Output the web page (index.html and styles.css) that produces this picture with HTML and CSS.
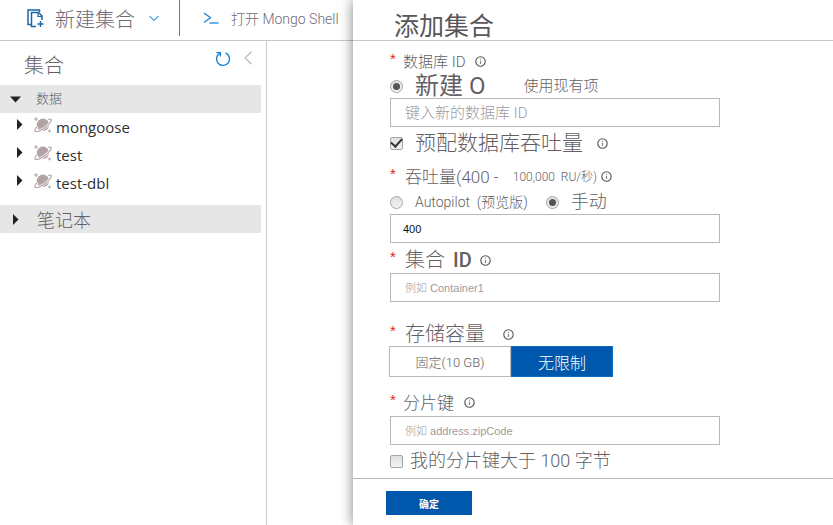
FILE: index.html
```html
<!DOCTYPE html>
<html lang="zh-CN">
<head>
<meta charset="utf-8">
<meta name="viewport" content="width=device-width, initial-scale=1">
<title>添加集合</title>
<link rel="stylesheet" href="styles.css">
</head>
<body>
<svg class="defs" aria-hidden="true">
  <symbol id="info" viewBox="0 0 11 11"><circle cx="5.5" cy="5.5" r="4.7" fill="#fff" stroke="#555" stroke-width="1.1"/><path d="M5.5 4.7V8M5.5 2.8v1" stroke="#888" stroke-width="1.2"/></symbol>
  <symbol id="planet" viewBox="0 0 18 17"><circle cx="9" cy="7.8" r="6.2" fill="#b3a3a5"/><path d="M3.5 9.2C1.5 11.4.4 13.4 1.2 14.2c1.2 1.3 6-.6 10.3-3.9 4.3-3.3 6.5-6.8 5.5-7.9-.5-.6-1.5-.4-2.8.1" fill="none" stroke="#fff" stroke-width="2.4"/><path d="M3.5 9.2C1.5 11.4.4 13.4 1.2 14.2c1.2 1.3 6-.6 10.3-3.9 4.3-3.3 6.5-6.8 5.5-7.9-.5-.6-1.5-.4-2.8.1" fill="none" stroke="#b3a3a5" stroke-width="1.2"/><path d="M2 0v4M0 2h4M15.5 12.5v3M14 14h3" stroke="#b3a3a5" stroke-width="1"/></symbol>
</svg>
<div class="app">
  <main class="explorer">
    <header class="toolbar">
      <button class="command new" type="button">
        <svg class="copy" viewBox="0 0 17 19" fill="none" stroke="#1767a8" stroke-width="1.5"><path d="M4 15.5H1V1h11.5v2"/><path d="M9 17.5H4.5V3.5h7l3.5 3.5v4"/><path d="M11 3.5V7.5h4" stroke-width="1.2"/><path d="M13.5 12v6M10.5 15h6" stroke-width="1.4"/></svg>
        <span>新建集合</span>
        <svg class="down" viewBox="0 0 10 7" fill="none" stroke="#4aa3e8" stroke-width="1.2"><path d="M.5 1L5 5.5 9.5 1"/></svg>
      </button>
      <button class="command shell" type="button">
        <svg class="prompt" viewBox="0 0 16 13" fill="none" stroke="#1f86d8" stroke-width="1.4"><path d="M1 1l6.5 4.8L1 10.5"/><path d="M6.5 11h9" stroke="#6db1ea" stroke-width="2"/></svg>
        <span>打开 Mongo Shell</span>
      </button>
    </header>
    <aside class="sidebar">
      <div class="side-head">
        <h2>集合</h2>
        <button type="button" aria-label="刷新"><svg class="refresh" viewBox="0 0 16 16" fill="none" stroke="#1482d8" stroke-width="1.4"><path d="M10.5 1.9A6.5 6.5 0 1 1 4.6 2.4"/><path d="M1.5 1.6h3.9v4"/></svg></button>
        <button type="button" aria-label="收起"><svg class="collapse" viewBox="0 0 8 14" fill="none" stroke="#bdb6b6" stroke-width="1.2"><path d="M7.5.8L1 7l6.5 6.2"/></svg></button>
      </div>
      <div class="group data"><svg class="arrow" viewBox="0 0 11 11"><path d="M0 2.5h11L5.5 8.5z" fill="#222"/></svg><span>数据</span></div>
      <ul class="tree">
        <li><svg class="arrow" viewBox="0 0 11 11"><path d="M3 0l5.5 5.5L3 11z" fill="#222"/></svg><svg class="planet"><use href="#planet"/></svg><span>mongoose</span></li>
        <li><svg class="arrow" viewBox="0 0 11 11"><path d="M3 0l5.5 5.5L3 11z" fill="#222"/></svg><svg class="planet"><use href="#planet"/></svg><span>test</span></li>
        <li><svg class="arrow" viewBox="0 0 11 11"><path d="M3 0l5.5 5.5L3 11z" fill="#222"/></svg><svg class="planet"><use href="#planet"/></svg><span>test-dbl</span></li>
      </ul>
      <div class="group notebooks"><svg class="arrow" viewBox="0 0 11 11"><path d="M3 0l5.5 5.5L3 11z" fill="#222"/></svg><span>笔记本</span></div>
    </aside>
  </main>
  <form class="panel">
    <h1>添加集合</h1>
    <div class="fields">
      <div class="row narrow"><label class="required s15" for="db">数据库 ID</label><svg class="info"><use href="#info"/></svg></div>
      <div class="row choices"><label class="choice"><input type="radio" name="database" checked><span class="strong">新建 O</span></label><span class="existing s15">使用现有项</span></div>
      <input class="text large" id="db" type="text" placeholder="键入新的数据库 ID">
      <div class="row tall"><label class="choice"><input type="checkbox" checked><span class="s21">预配数据库吞吐量</span></label><svg class="info"><use href="#info"/></svg></div>
      <div class="row throughput"><label class="required s17" for="ru">吞吐量(400 - <small>100,000 &nbsp;RU/秒)</small></label><svg class="info"><use href="#info"/></svg></div>
      <div class="row choices"><label class="choice"><input type="radio" name="mode"><span class="s14">Autopilot &nbsp;(预览版)</span></label><label class="choice manual"><input type="radio" name="mode" checked><span class="s18">手动</span></label></div>
      <input class="text value" id="ru" type="text" value="400">
      <div class="row field"><label class="required s20" for="collection">集合 <b>ID</b></label><svg class="info"><use href="#info"/></svg></div>
      <input class="text" id="collection" type="text" placeholder="例如 Container1">
      <div class="row section"><span class="required s20">存储容量</span><svg class="info"><use href="#info"/></svg></div>
      <div class="segments"><button class="s13" type="button">固定(10 GB)</button><button class="selected" type="button">无限制</button></div>
      <div class="row narrow shard"><label class="required s17" for="shard">分片键</label><svg class="info"><use href="#info"/></svg></div>
      <input class="text" id="shard" type="text" placeholder="例如 address.zipCode">
      <div class="row tall"><label class="choice compact"><input type="checkbox"><span class="s18">我的分片键大于 100 字节</span></label></div>
    </div>
    <footer><button type="submit">确定</button></footer>
  </form>
</div>
</body>
</html>
```

FILE: styles.css
```css
* { box-sizing: border-box; }
body {
  margin: 0;
  background: #fff;
  color: #635f65;
  font-family: Roboto, "Noto Sans CJK SC", sans-serif;
  font-weight: 300;
}
button, input { font: inherit; color: inherit; }
button { padding: 0; border: 0; background: none; }
h1, h2, ul { margin: 0; padding: 0; }
svg { display: block; flex: none; }
.defs { position: absolute; width: 0; height: 0; }
.app {
  display: grid;
  grid-template-columns: minmax(0, 1fr) minmax(0, 480px);
  min-height: 100vh;
}
.explorer { display: flex; flex-direction: column; }
.toolbar {
  display: flex;
  height: 41px;
  border-bottom: 1px solid #c8c8c8;
  white-space: nowrap;
}
.command { display: flex; align-items: center; height: 36px; color: #6f6975; }
.new { padding: 0 20px 0 27px; border-right: 1px solid #777; font-size: 20px; }
.copy { width: 17px; height: 19px; margin-right: 11px; }
.down { width: 10px; height: 7px; margin-left: 14px; }
.shell { padding-left: 23px; font-size: 14px; }
.prompt { width: 16px; height: 13px; margin-right: 12px; }
.sidebar { flex: 1; width: 267px; padding-right: 5px; border-right: 1px solid #c8c8c8; }
.side-head { display: flex; align-items: flex-start; height: 44px; padding: 10px 9px 0 24px; }
h2 { flex: 1; font-size: 20px; line-height: 30px; font-weight: 300; }
.refresh { width: 16px; height: 16px; }
.collapse { width: 8px; height: 14px; margin-left: 13px; }
.group { display: flex; align-items: center; height: 28px; background: #e6e6e6; }
.data { padding-left: 10px; font-size: 13px; line-height: 16px; }
.data .arrow { margin-right: 15px; }
.notebooks { padding-left: 10px; font-size: 18px; }
.notebooks .arrow { margin-right: 16px; }
.arrow { width: 11px; height: 11px; }
.tree { padding: 0 0 8px 14px; list-style: none; }
.tree li {
  display: flex;
  height: 28px;
  padding-top: 4px;
  color: #303030;
  font: 400 15px/20px "Open Sans", "Noto Sans", sans-serif;
}
.tree .arrow { margin: 2px 9px 0 0; }
.planet { width: 18px; height: 17px; margin-right: 4px; }
.panel {
  position: relative;
  display: flex;
  flex-direction: column;
  background: #fff;
  box-shadow: 0 0 12px #00000080;
}
h1 {
  height: 41px;
  padding: 10px 0 0 41px;
  border-bottom: 1px solid #c8c8c8;
  font-size: 25px;
  line-height: 34px;
  font-weight: 400;
  color: #58565b;
}
.fields { flex: 1; padding: 8px 113px 0 37px; }
.row { display: flex; align-items: center; height: 24px; line-height: 24px; white-space: nowrap; }
.row:first-child { height: 25px; }
.tall { height: 32px; }
.throughput { height: 31px; padding-top: 4px; }
.field { height: 30px; padding-top: 4px; }
.section { height: 28px; margin-top: 16px; padding-top: 4px; }
.shard { height: 27px; margin-top: 12px; }
.required { display: flex; align-items: center; }
.required::before {
  content: "*";
  align-self: flex-start;
  width: 15px;
  color: #f01820;
  font: 400 15px/18px "Liberation Sans", sans-serif;
}
.narrow .required::before { width: 13px; }
.s13 { font-size: 13px; }
.s14 { font-size: 14px; }
.s15 { font-size: 15px; }
.s17 { font-size: 17px; }
.s18 { font-size: 18px; }
.s20 { font-size: 20px; }
.s21 { font-size: 21px; }
.strong { font-size: 24px; font-weight: 400; }
small { margin-left: 14px; font-size: 12px; }
b { margin-left: 8px; font-weight: 500; }
.info { width: 11px; height: 11px; margin-left: 14px; }
.narrow .info { margin-left: 10px; }
.throughput .info { margin-left: 4px; }
.field .info { margin-left: 8px; }
.section .info { margin-left: 18px; }
.choice { display: flex; align-items: center; }
.choice span { margin-left: 12px; }
.choice.compact span { margin-left: 7px; }
.existing { margin-left: 38px; }
.manual { margin-left: 18px; }
.choice input {
  appearance: none;
  display: grid;
  place-items: center;
  width: 13px;
  height: 13px;
  margin: 0;
  border: 1px solid #a5a5a5;
  border-radius: 2px;
  background: linear-gradient(#e0e0e0, #f2f2f2);
}
.choice input[type="radio"] { border-radius: 50%; }
.choice input[type="radio"]:checked::before {
  content: "";
  width: 7px;
  height: 7px;
  border-radius: 50%;
  background: #555;
}
.choice input[type="checkbox"]:checked::before {
  content: "";
  width: 9px;
  height: 5px;
  margin-bottom: 3px;
  border: solid #333;
  border-width: 0 0 2px 2px;
  transform: rotate(-48deg);
}
.text {
  display: block;
  width: 100%;
  height: 29px;
  padding: 0 14px;
  border: 1px solid #b8b8b8;
  border-radius: 0;
  background: #fff;
  font-family: "Liberation Sans", "Noto Sans CJK SC", sans-serif;
  font-size: 11px;
}
.text::placeholder { color: #a09ba0; opacity: 1; }
.large { font-family: inherit; font-size: 15px; }
.value { padding: 0 12px; color: #111; }
.segments { display: flex; height: 31px; margin-left: -1px; }
.segments button { width: 122px; border: 1px solid #b8b8b8; }
.segments .selected { width: 102px; border-color: #0c6fc4; background: #0058ad; color: #fff; font-size: 16px; }
footer { height: 47px; padding: 12px 33px; border-top: 1px solid #b8b8b8; }
footer button {
  display: block;
  width: 86px;
  height: 24px;
  background: #0058ad;
  color: #fff;
  font-size: 10px;
  font-weight: 700;
}
```
